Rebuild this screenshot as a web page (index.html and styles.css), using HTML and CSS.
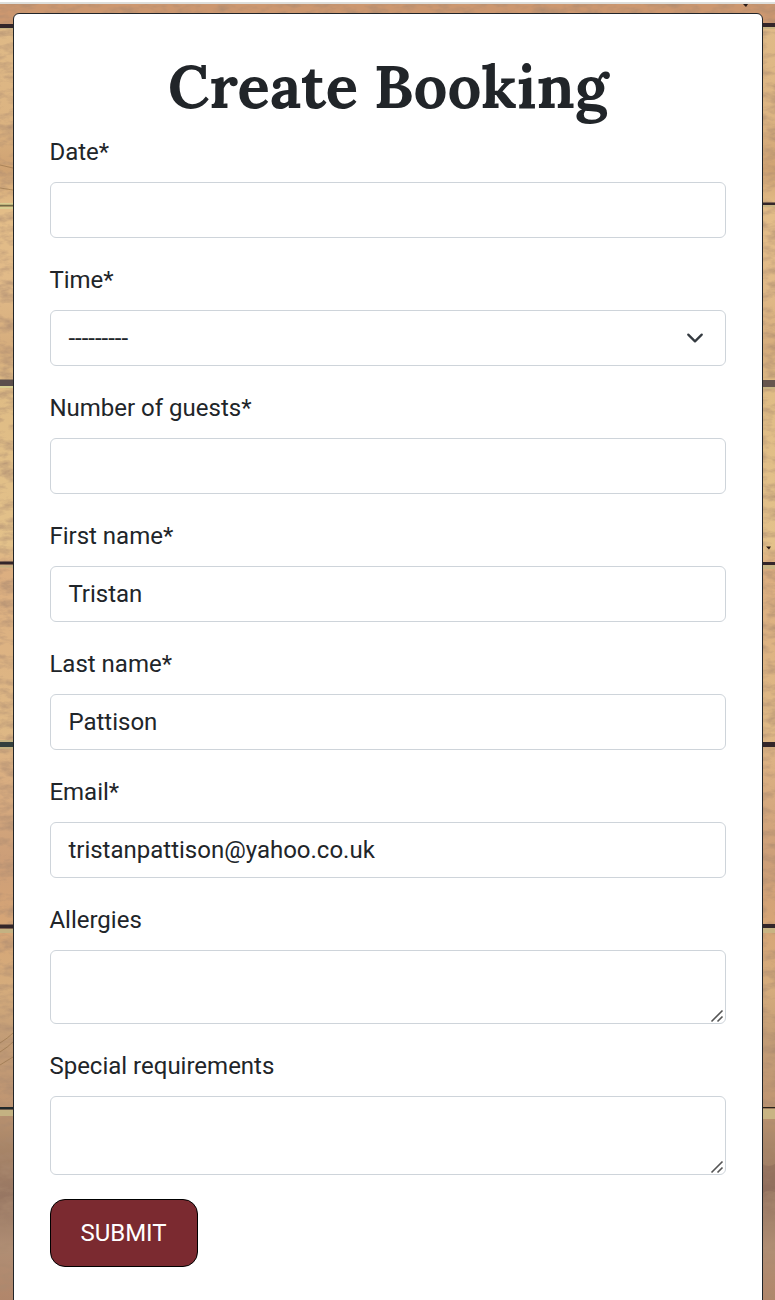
FILE: index.html
```
<!DOCTYPE html>
<html lang="en">
<head>
<meta charset="utf-8">
<title>Create Booking</title>
<link rel="stylesheet" href="styles.css">
</head>
<body>
<svg class="wood" viewBox="0 0 775 1300" preserveAspectRatio="none" aria-hidden="true">
  <defs>
    <linearGradient id="tone" gradientUnits="userSpaceOnUse" x1="0" y1="0" x2="0" y2="1300">
      <stop offset="0" stop-color="#cc976f"/><stop offset=".018" stop-color="#cc976f"/>
      <stop offset=".022" stop-color="#dfba87"/><stop offset=".09" stop-color="#dcb482"/>
      <stop offset=".13" stop-color="#cfa272"/><stop offset=".16" stop-color="#e3bd88"/>
      <stop offset=".22" stop-color="#e1ba88"/><stop offset=".27" stop-color="#d5ac7c"/>
      <stop offset=".3" stop-color="#dfbc85"/><stop offset=".42" stop-color="#e3c18a"/>
      <stop offset=".435" stop-color="#dcae80"/><stop offset=".56" stop-color="#deb885"/>
      <stop offset=".59" stop-color="#dbb082"/><stop offset=".66" stop-color="#cc9e78"/>
      <stop offset=".71" stop-color="#d6a576"/><stop offset=".76" stop-color="#d5ac7c"/>
      <stop offset=".8" stop-color="#c29c76"/><stop offset=".85" stop-color="#c09672"/>
      <stop offset=".88" stop-color="#a98668"/><stop offset=".92" stop-color="#977662"/>
      <stop offset=".96" stop-color="#b08e74"/><stop offset="1" stop-color="#b2866a"/>
    </linearGradient>
    <filter id="grain" x="0" y="0" width="100%" height="100%">
      <feTurbulence type="fractalNoise" baseFrequency=".06 .13" numOctaves="4" seed="8"/>
      <feColorMatrix values="0 0 0 0 .4  0 0 0 0 .25  0 0 0 0 .16  1.5 0 0 0 -.62"/>
    </filter>
  </defs>
  <rect width="775" height="1300" fill="url(#tone)"/>
  <rect width="775" height="1300" filter="url(#grain)"/>
  <g>
    <path fill="#33262a" d="M0 24h14v4H0zM0 561.500h14v3H0zM0 924.500h14v4H0z"/>
    <path fill="#6f6b45" d="M0 204.500h14v2H0z"/>
    <path fill="#d8cf92" d="M0 203h14v1.500H0zM0 207h14v2H0zM0 386h14v2H0z"/>
    <path fill="#5b4e4c" d="M0 379.500h14v6.500H0z"/>
    <path fill="#33403e" d="M0 742h14v5H0z"/>
    <path fill="#20282b" d="M0 1107h14v2.500H0z"/>
    <path fill="#c4b282" d="M0 28h14v1H0zM0 565.500h14v2H0zM0 740h14v2H0zM0 747h14v2H0zM0 929h14v4H0zM0 1110h14v6H0z"/>
    <path fill="none" stroke="#8f6d45" stroke-width=".8" opacity=".7" d="M0 165l13 3M0 188l13 2M0 1043q8-5 13-10M0 1052q8-5 13-10M0 1065q8-5 13-8"/>
  </g>
  <g>
    <path fill="#33262a" d="M762 23h13v4h-13zM762 202.500h13v2.500h-13zM762 562h13v3h-13zM762 742h13v5h-13zM762 924h13v4h-13z"/>
    <path fill="#66564f" d="M762 380h13v7h-13z"/>
    <path fill="#272019" d="M762 1107h13v1.200h-13z"/>
    <path fill="#c8b483" d="M762 27h13v2h-13zM762 205h13v2h-13zM762 387h13v2h-13zM762 565h13v4h-13zM762 928h13v5h-13zM762 1109h13v10h-13z"/>
    <path fill="#2b1b16" d="M743 4h5l-2 3zM766 546.500h5l-2 3z"/>
    <path fill="#754f4b" opacity=".25" d="M762 1164q7 4 13 0v28q-7-4-13 2z"/>
  </g>
  <rect width="775" height="2" fill="#fff"/>
  <rect y="2" width="775" height="2" fill="#dedfdc"/>
</svg>
<main class="card">
  <h1 class="title">Create Booking</h1>
  <form class="form">
    <div class="field"><label for="date">Date*</label><input id="date" class="control" type="text"></div>
    <div class="field">
      <label for="time">Time*</label>
      <div class="wrap">
        <select id="time" class="control"><option>---------</option></select>
        <svg class="chevron" viewBox="0 0 16 16"><path d="m2 5 6 6 6-6"/></svg>
      </div>
    </div>
    <div class="field"><label for="guests">Number of guests*</label><input id="guests" class="control" type="text"></div>
    <div class="field"><label for="first">First name*</label><input id="first" class="control" type="text" value="Tristan"></div>
    <div class="field"><label for="last">Last name*</label><input id="last" class="control" type="text" value="Pattison"></div>
    <div class="field"><label for="email">Email*</label><input id="email" class="control" type="text" value="tristanpattison@yahoo.co.uk"></div>
    <div class="field">
      <label for="allergies">Allergies</label>
      <div class="wrap">
        <textarea id="allergies" class="control area"></textarea>
        <svg class="grip" viewBox="0 0 14 14"><path d="M1.500 12.500l11-11M7.500 12.500l5-5"/></svg>
      </div>
    </div>
    <div class="field">
      <label for="special">Special requirements</label>
      <div class="wrap">
        <textarea id="special" class="control area area-tall"></textarea>
        <svg class="grip" viewBox="0 0 14 14"><path d="M1.500 12.500l11-11M7.500 12.500l5-5"/></svg>
      </div>
    </div>
    <button class="submit" type="button">SUBMIT</button>
  </form>
</main>
</body>
</html>
```
FILE: styles.css
```
* { box-sizing: border-box; }
body {
  margin: 0;
  height: 1300px;
  padding: 13px 12px 0 13px;
  overflow: hidden;
  position: relative;
  color: #212529;
  font: 24px/36px Roboto, sans-serif;
}
.wood {
  position: absolute;
  inset: 0;
  z-index: -1;
  width: 775px;
  height: 1300px;
}
.card {
  height: 1320px;
  padding: 36px;
  background: #fff;
  border: 1px solid #212529;
  border-radius: 6px;
}
.title {
  margin: 0 0 12px;
  font: bold 60px/72px Lora, "Liberation Serif", serif;
  text-align: center;
  white-space: nowrap;
}
.form {
  display: flex;
  flex-direction: column;
  align-items: stretch;
  gap: 24px;
}
.field {
  display: flex;
  flex-direction: column;
  gap: 12px;
}
.field label { margin-left: -.6px; }
.wrap {
  display: flex;
  position: relative;
}
.control {
  display: block;
  width: 100%;
  height: 56px;
  margin: 0;
  padding: 9px 17.4px;
  appearance: none;
  background: #fff;
  border: 1px solid #ced4da;
  border-radius: 6px;
  color: inherit;
  font: inherit;
  letter-spacing: inherit;
  outline: none;
}
.area {
  height: 74px;
  resize: none;
}
.area-tall { height: 79px; }
.chevron {
  position: absolute;
  right: 22px;
  top: 19px;
  width: 18px;
  height: 18px;
  fill: none;
  stroke: #343a40;
  stroke-width: 2;
  stroke-linecap: round;
  stroke-linejoin: round;
}
.grip {
  position: absolute;
  right: 2px;
  bottom: 1px;
  width: 14px;
  height: 14px;
  fill: none;
  stroke: #555;
  stroke-width: 1.6;
}
.submit {
  align-self: flex-start;
  width: 148px;
  height: 68px;
  padding: 0 1px 0 0;
  background: #7b2a30;
  border: 1px solid #000;
  border-radius: 15px;
  color: #fff;
  font: inherit;
}
```
